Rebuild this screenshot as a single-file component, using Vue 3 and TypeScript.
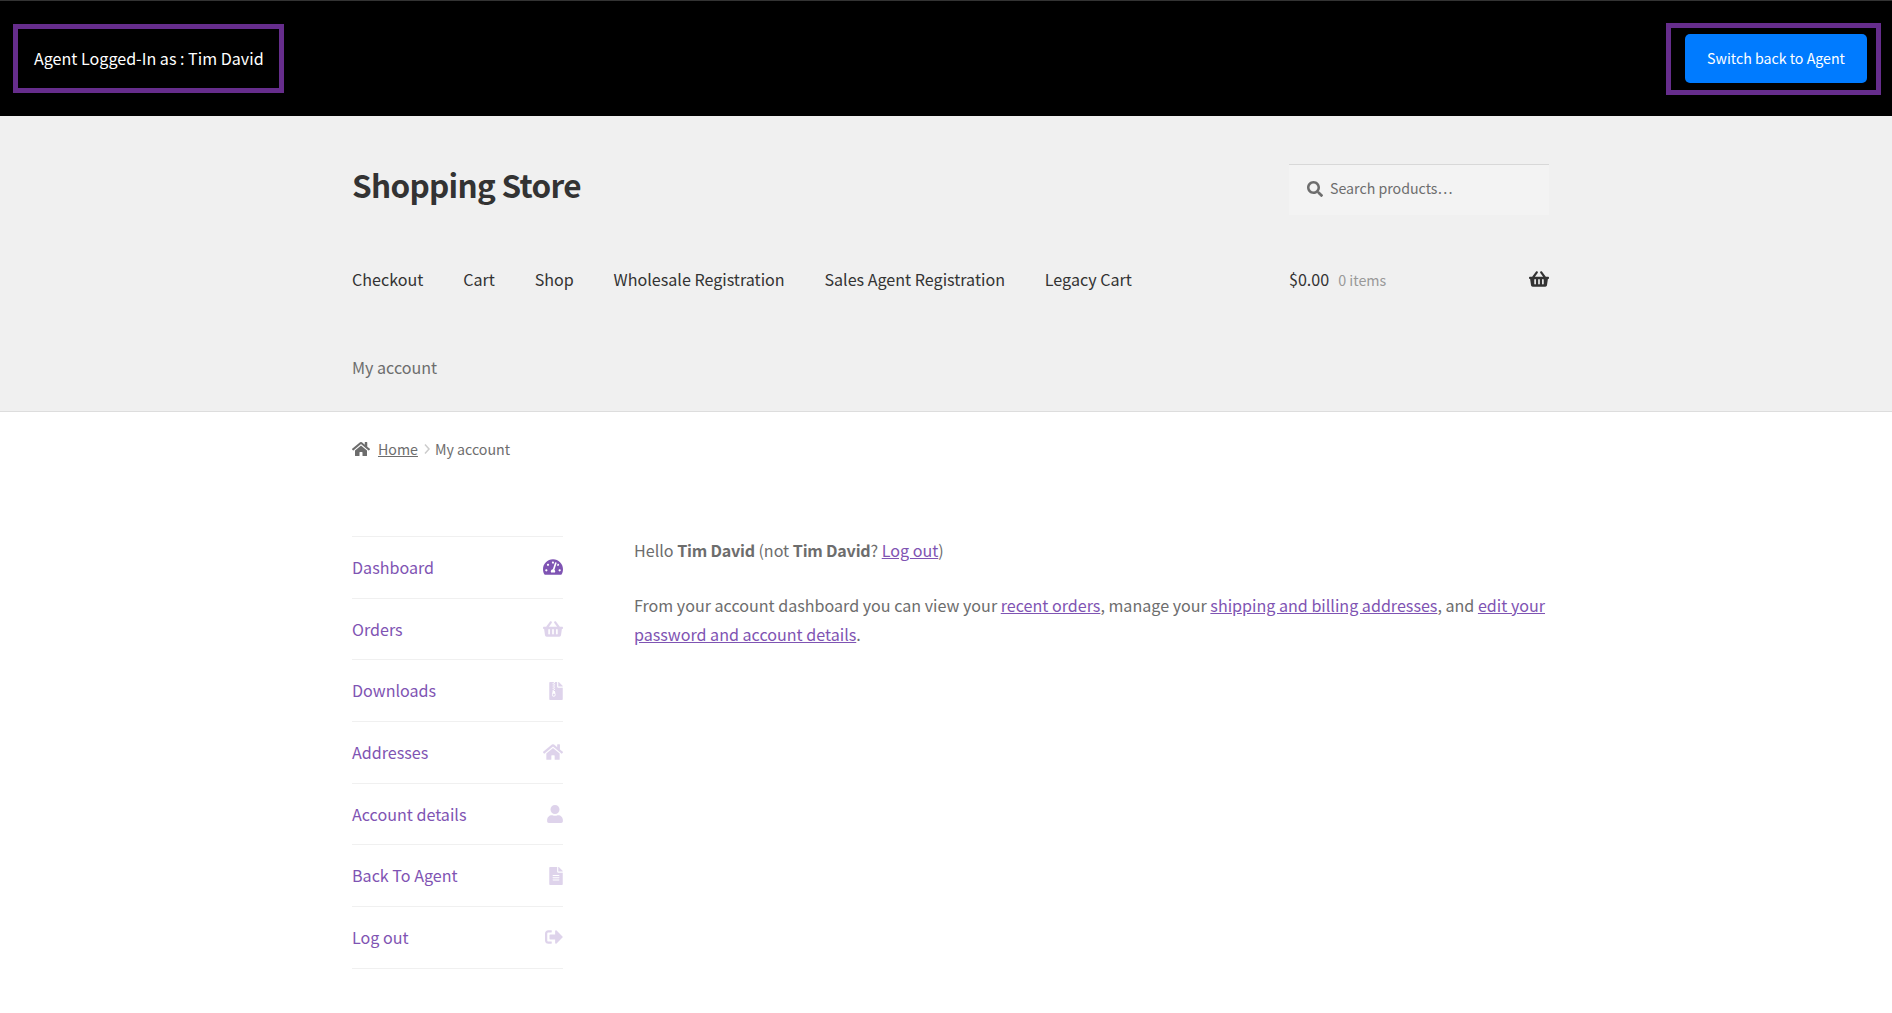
<script setup lang="ts">
type MenuItem = { label: string; icon: string; box: string; width: number; active?: boolean };

const icons = {
  gauge: "M288 32C128.94 32 0 160.94 0 320c0 52.8 14.25 102.26 39.06 144.8 5.61 9.62 16.3 15.2 27.44 15.2h443c11.14 0 21.83-5.58 27.44-15.2C561.75 422.26 576 372.8 576 320c0-159.06-128.94-288-288-288zm0 64c14.71 0 26.58 10.13 30.32 23.65-1.11 2.26-2.64 4.23-3.45 6.67l-9.22 27.67c-5.13 3.49-10.97 6.01-17.64 6.01-17.67 0-32-14.33-32-32S270.33 96 288 96zM96 384c-17.67 0-32-14.33-32-32s14.33-32 32-32 32 14.33 32 32-14.33 32-32 32zm48-160c-17.67 0-32-14.33-32-32s14.33-32 32-32 32 14.33 32 32-14.33 32-32 32zm246.77-72.41l-61.33 184C343.13 347.33 352 364.54 352 384c0 11.72-3.38 22.55-8.88 32H232.88c-5.5-9.45-8.88-20.28-8.88-32 0-33.94 26.5-61.43 59.9-63.59l61.34-184.01c4.17-12.56 17.73-19.45 30.36-15.17 12.57 4.19 19.35 17.79 15.17 30.36zm14.66 57.2l15.52-46.55c3.47-1.29 7.13-2.23 11.05-2.23 17.67 0 32 14.33 32 32s-14.33 32-32 32c-11.38-.01-20.89-6.28-26.57-15.22zM480 384c-17.67 0-32-14.33-32-32s14.33-32 32-32 32 14.33 32 32-14.33 32-32 32z",
  basket: "M576 216v16c0 13.255-10.745 24-24 24h-8l-26.113 182.788C514.509 462.435 494.257 480 470.37 480H105.63c-23.887 0-44.139-17.565-47.518-41.212L32 256h-8c-13.255 0-24-10.745-24-24v-16c0-13.255 10.745-24 24-24h67.341l106.78-146.821c10.395-14.292 30.407-17.453 44.701-7.058 14.293 10.395 17.453 30.408 7.058 44.701L170.477 192h235.046L326.12 82.821c-10.395-14.292-7.234-34.306 7.059-44.701 14.291-10.395 34.306-7.235 44.701 7.058L484.659 192H552c13.255 0 24 10.745 24 24zM312 392V280c0-13.255-10.745-24-24-24s-24 10.745-24 24v112c0 13.255 10.745 24 24 24s24-10.745 24-24zm112 0V280c0-13.255-10.745-24-24-24s-24 10.745-24 24v112c0 13.255 10.745 24 24 24s24-10.745 24-24zm-224 0V280c0-13.255-10.745-24-24-24s-24 10.745-24 24v112c0 13.255 10.745 24 24 24s24-10.745 24-24z",
  archive: "M377 105L279.1 7c-4.5-4.5-10.6-7-17-7H256v128h128v-6.1c0-6.3-2.5-12.4-7-16.9zM128.4 336c-17.9 0-32.4 12.1-32.4 27 0 15 14.6 27 32.5 27s32.4-12.1 32.4-27-14.6-27-32.5-27zM224 136V0h-63.6v32h-32V0H24C10.7 0 0 10.7 0 24v464c0 13.3 10.7 24 24 24h336c13.3 0 24-10.7 24-24V160H248c-13.2 0-24-10.8-24-24zM95.9 32h32v32h-32zm32.3 384c-33.2 0-58-30.4-51.4-62.9L96.4 256v-32h32v-32h-32v-32h32v-32h-32V96h32V64h32v32h-32v32h32v32h-32v32h32v32h-32v32h22.1c5.7 0 10.7 4.1 11.8 9.7l17.3 87.7c6.4 32.4-18.4 62.6-51.4 62.6z",
  home: "M280.37 148.26L96 300.11V464a16 16 0 0 0 16 16l112.06-.29a16 16 0 0 0 15.92-16V368a16 16 0 0 1 16-16h64a16 16 0 0 1 16 16v95.64a16 16 0 0 0 16 16.05L464 480a16 16 0 0 0 16-16V300L295.67 148.26a12.19 12.19 0 0 0-15.3 0zM571.6 251.47L488 182.56V44.05a12 12 0 0 0-12-12h-56a12 12 0 0 0-12 12v72.61L318.47 43a48 48 0 0 0-61 0L4.34 251.47a12 12 0 0 0-1.6 16.9l25.5 31A12 12 0 0 0 45.15 301l235.22-193.74a12.19 12.19 0 0 1 15.3 0L530.9 301a12 12 0 0 0 16.9-1.6l25.5-31a12 12 0 0 0-1.7-16.93z",
  user: "M224 256c70.7 0 128-57.3 128-128S294.7 0 224 0 96 57.3 96 128s57.3 128 128 128zm89.6 32h-16.7c-22.2 10.2-46.9 16-72.9 16s-50.6-5.8-72.9-16h-16.7C60.2 288 0 348.2 0 422.4V464c0 26.5 21.5 48 48 48h352c26.5 0 48-21.5 48-48v-41.6c0-74.2-60.2-134.4-134.4-134.4z",
  file: "M224 136V0H24C10.7 0 0 10.7 0 24v464c0 13.3 10.7 24 24 24h336c13.3 0 24-10.7 24-24V160H248c-13.2 0-24-10.8-24-24zm64 236c0 6.6-5.4 12-12 12H108c-6.6 0-12-5.4-12-12v-8c0-6.6 5.4-12 12-12h168c6.6 0 12 5.4 12 12v8zm0-64c0 6.6-5.4 12-12 12H108c-6.6 0-12-5.4-12-12v-8c0-6.6 5.4-12 12-12h168c6.6 0 12 5.4 12 12v8zm0-72v8c0 6.6-5.4 12-12 12H108c-6.6 0-12-5.4-12-12v-8c0-6.6 5.4-12 12-12h168c6.6 0 12 5.4 12 12zm96-114.1v6.1H256V0h6.1c6.4 0 12.5 2.5 17 7l97.9 98c4.5 4.5 7 10.6 7 16.9z",
  signout: "M497 273L329 441c-15 15-41 4.5-41-17v-96H152c-13.3 0-24-10.7-24-24v-96c0-13.3 10.7-24 24-24h136V88c0-21.4 25.9-32 41-17l168 168c9.3 9.4 9.3 24.6 0 34zM192 436v-40c0-6.6-5.4-12-12-12H96c-17.7 0-32-14.3-32-32V160c0-17.7 14.3-32 32-32h84c6.6 0 12-5.4 12-12V76c0-6.6-5.4-12-12-12H96c-53 0-96 43-96 96v192c0 53 43 96 96 96h84c6.6 0 12-5.4 12-12z",
  search: "M505 442.7L405.3 343c-4.5-4.5-10.6-7-17-7H372c27.6-35.3 44-79.7 44-128C416 93.1 322.9 0 208 0S0 93.1 0 208s93.1 208 208 208c48.3 0 92.7-16.4 128-44v16.3c0 6.4 2.5 12.5 7 17l99.7 99.7c9.4 9.4 24.6 9.4 33.9 0l28.3-28.3c9.4-9.4 9.4-24.6.1-34zM208 336c-70.7 0-128-57.2-128-128 0-70.7 57.2-128 128-128 70.7 0 128 57.2 128 128 0 70.7-57.2 128-128 128z",
};

const nav_links = ["Checkout", "Cart", "Shop", "Wholesale Registration", "Sales Agent Registration", "Legacy Cart"];

const menu: MenuItem[] = [
  { label: "Dashboard", icon: icons.gauge, box: "0 0 576 512", width: 20, active: true },
  { label: "Orders", icon: icons.basket, box: "0 0 576 512", width: 20 },
  { label: "Downloads", icon: icons.archive, box: "0 0 384 512", width: 14 },
  { label: "Addresses", icon: icons.home, box: "0 0 576 512", width: 20 },
  { label: "Account details", icon: icons.user, box: "0 0 448 512", width: 16 },
  { label: "Back To Agent", icon: icons.file, box: "0 0 384 512", width: 14 },
  { label: "Log out", icon: icons.signout, box: "0 0 512 512", width: 18 },
];
</script>

<template>
  <div class="agent_bar">
    <div class="agent_box agent_name">Agent Logged-In as : Tim David</div>
    <div class="agent_box agent_action">
      <button type="button" class="switch_btn">Switch back to Agent</button>
    </div>
  </div>

  <header class="site_header">
    <div class="col_full">
      <div class="brand_row">
        <h1 class="site_title">Shopping Store</h1>
        <form class="search_box" @submit.prevent>
          <svg class="search_icon" viewBox="0 0 512 512"><path :d="icons.search" /></svg>
          <input type="text" placeholder="Search products…" aria-label="Search products" />
        </form>
      </div>
      <div class="nav_row">
        <nav class="main_nav">
          <a v-for="link in nav_links" :key="link" href="#" @click.prevent>{{ link }}</a>
          <a href="#" class="current" @click.prevent>My account</a>
        </nav>
        <a href="#" class="mini_cart" @click.prevent>
          <span class="cart_total">$0.00</span>
          <span class="cart_count">0 items</span>
          <svg class="cart_icon" viewBox="0 0 576 512"><path :d="icons.basket" /></svg>
        </a>
      </div>
    </div>
  </header>

  <main class="col_full">
    <div class="breadcrumb">
      <svg class="crumb_home" viewBox="0 0 576 512"><path :d="icons.home" /></svg>
      <a href="#" @click.prevent>Home</a>
      <svg class="crumb_sep" viewBox="0 0 8 12"><path d="M2 1.5 6 6l-4 4.5" /></svg>
      <span>My account</span>
    </div>

    <div class="account">
      <ul class="account_menu">
        <li v-for="item in menu" :key="item.label">
          <a href="#" @click.prevent>
            {{ item.label }}
            <svg
              class="menu_icon"
              :class="{ active: item.active }"
              :viewBox="item.box"
              :style="{ width: item.width + 'px' }"
            ><path :d="item.icon" /></svg>
          </a>
        </li>
      </ul>

      <section class="account_content">
        <p>
          Hello <strong>Tim David</strong> (not <strong>Tim David</strong>?
          <a href="#" @click.prevent>Log out</a>)
        </p>
        <p>
          From your account dashboard you can view your
          <a href="#" @click.prevent>recent orders</a>, manage your
          <a href="#" @click.prevent>shipping and billing addresses</a>, and
          <a href="#" @click.prevent>edit your password and account details</a>.
        </p>
      </section>
    </div>
  </main>
</template>

<style>
html,
body {
  margin: 0;
  background: #fff;
}

body {
  font-family: "Noto Sans CJK SC", "Noto Sans", sans-serif;
  font-size: 16.1px;
  line-height: 29px;
  color: #6d6d6d;
}
</style>

<style scoped>
.agent_bar {
  display: flex;
  justify-content: space-between;
  align-items: center;
  box-sizing: border-box;
  height: 116px;
  padding: 0 11px 0 13px;
  background: #000;
  border-top: 1px solid #333;
}

.agent_box {
  box-sizing: border-box;
  border: 5px solid #662d8c;
}

.agent_name {
  width: 271px;
  height: 69px;
  padding: 0 16px;
  color: #fff;
  line-height: 59px;
  white-space: nowrap;
}

.agent_action {
  display: flex;
  align-items: center;
  justify-content: flex-end;
  width: 215px;
  height: 72px;
  padding-right: 9px;
}

.switch_btn {
  width: 182px;
  height: 49px;
  padding: 0 0 2px;
  border: 0;
  border-radius: 5px;
  background: #007bff;
  color: #fff;
  font: inherit;
  font-size: 14.2px;
  line-height: 24px;
}

.site_header {
  box-sizing: border-box;
  height: 296px;
  background: #f0f0f0;
  border-bottom: 1px solid #ddd;
}

.col_full {
  width: 1197px;
  margin-left: 352px;
}

.brand_row {
  display: flex;
  justify-content: space-between;
  align-items: flex-start;
  padding-top: 48px;
}

.site_title {
  margin: -2px 0 0;
  color: #333;
  font-size: 31.5px;
  font-weight: 700;
  line-height: 44px;
  letter-spacing: -0.7px;
}

.search_box {
  display: flex;
  align-items: center;
  gap: 7px;
  box-sizing: border-box;
  width: 260px;
  height: 51px;
  padding: 0 18px 3px;
  background: #f3f3f3;
  border-top: 1px solid #d8d8d8;
}

.search_icon {
  flex: none;
  width: 16px;
  height: 16px;
  margin-top: 1px;
  fill: #6d6d6d;
}

.search_box input {
  flex: 1;
  min-width: 0;
  padding: 0;
  border: 0;
  outline: 0;
  background: transparent;
  color: #6d6d6d;
  font: inherit;
  font-size: 14.2px;
}

.search_box input::placeholder {
  color: #6d6d6d;
  opacity: 1;
}

.nav_row {
  display: flex;
  justify-content: space-between;
  align-items: flex-start;
  padding-top: 50px;
}

.main_nav {
  display: flex;
  flex-wrap: wrap;
  column-gap: 39.85px;
  row-gap: 59px;
  width: 860px;
}

.main_nav a {
  color: #333;
  text-decoration: none;
  white-space: nowrap;
}

.main_nav a.current {
  color: #6d6d6d;
}

.mini_cart {
  display: flex;
  align-items: center;
  width: 260px;
  color: #333;
  text-decoration: none;
}

.cart_count {
  margin-left: 9px;
  color: #999;
  font-size: 14.3px;
}

.cart_icon {
  width: 20px;
  height: 18px;
  margin-left: auto;
  margin-top: -2px;
  fill: #333;
}

.breadcrumb {
  display: flex;
  align-items: center;
  height: 24px;
  margin-top: 25px;
  color: #6d6d6d;
  font-size: 14.2px;
}

.breadcrumb a {
  color: #6d6d6d;
}

.crumb_home {
  width: 18px;
  height: 16px;
  margin-right: 8px;
  fill: #6d6d6d;
}

.crumb_sep {
  width: 8px;
  height: 12px;
  margin: 0 4px 0 5px;
  fill: none;
  stroke: #ccc;
  stroke-width: 1.5;
}

.account {
  display: flex;
  align-items: flex-start;
  margin-top: 75px;
}

.account_menu {
  flex: none;
  width: 211px;
  margin: 0 71px 0 0;
  padding: 0;
  list-style: none;
  border-top: 1px solid #f0f0f0;
}

.account_menu li {
  border-bottom: 1px solid #f0f0f0;
}

.account_menu a {
  display: flex;
  align-items: center;
  justify-content: space-between;
  height: 60.7px;
  color: #7f54b3;
  text-decoration: none;
}

.menu_icon {
  height: 18px;
  fill: #7f54b3;
  opacity: 0.25;
}

.menu_icon.active {
  opacity: 1;
}

.account_content {
  flex: 1;
}

.account_content p {
  margin: 0 0 26px;
}

.account_content a {
  color: #7f54b3;
}

.account_content strong {
  font-weight: 700;
  letter-spacing: -0.22px;
}
</style>
